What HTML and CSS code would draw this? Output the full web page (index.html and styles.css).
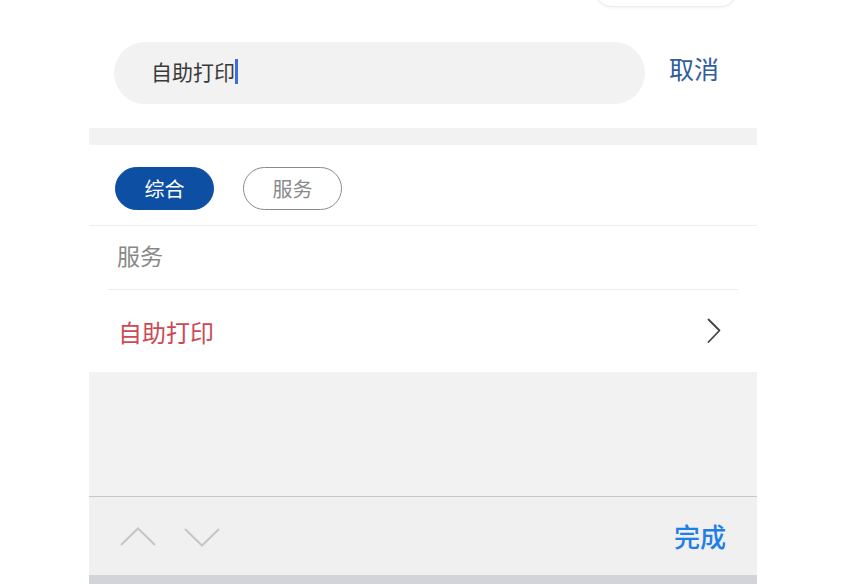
FILE: index.html
```html
<!DOCTYPE html>
<html lang="zh-CN">
<head>
<meta charset="utf-8">
<title>搜索</title>
<link rel="stylesheet" href="styles.css">
</head>
<body>
<div class="phone">
  <div class="top">
    <div class="top-pill"></div>
  </div>
  <div class="search-row">
    <div class="search-box">
      <span class="search-text">自助打印</span><span class="cursor"></span>
    </div>
    <div class="cancel">取消</div>
  </div>
  <div class="band"></div>
  <div class="tabs">
    <div class="pill active">综合</div>
    <div class="pill">服务</div>
  </div>
  <div class="section-title">服务</div>
  <div class="item">
    <span class="item-text">自助打印</span>
    <svg class="chev" width="14" height="26" viewBox="0 0 14 26"><path d="M1.5 1.5 L12.5 12.5 L1.5 24" fill="none" stroke="#444" stroke-width="1.8" stroke-linecap="round" stroke-linejoin="round"/></svg>
  </div>
  <div class="empty"></div>
  <div class="toolbar">
    <div class="arrows">
      <svg width="36" height="20" viewBox="0 0 36 20"><path d="M1 18 L18 1.5 L35 18" fill="none" stroke="#c6c6c6" stroke-width="2"/></svg>
      <svg width="36" height="20" viewBox="0 0 36 20"><path d="M1 2 L18 18.5 L35 2" fill="none" stroke="#c6c6c6" stroke-width="2"/></svg>
    </div>
    <div class="done">完成</div>
  </div>
  <div class="strip"></div>
</div>
</body>
</html>
```
FILE: styles.css
```css
html, body {
  margin: 0;
  padding: 0;
  background: #ffffff;
}
body {
  font-family: "Noto Sans CJK SC", "Noto Sans", sans-serif;
}
.phone {
  width: 668px;
  margin-left: 89px;
  display: flex;
  flex-direction: column;
}
.top {
  height: 42px;
  display: flex;
  justify-content: flex-end;
  padding-right: 20px;
  overflow: hidden;
}
.top-pill {
  width: 140px;
  height: 32px;
  margin-top: -27px;
  border: 1px solid #ececec;
  border-radius: 17px;
  box-shadow: 0 1px 3px rgba(0,0,0,0.05);
  background: #fff;
}
.search-row {
  display: flex;
  align-items: center;
  padding: 0 0 24px 25px;
}
.search-box {
  width: 494px;
  height: 58px;
  padding: 0 0 4px 37px;
  border-radius: 31px;
  background: #f2f2f2;
  display: flex;
  align-items: center;
}
.search-text {
  font-size: 21px;
  line-height: 26px;
  color: #3a3a3a;
}
.cursor {
  display: inline-block;
  width: 3px;
  height: 25px;
  background: #3d6ee0;
}
.cancel {
  margin-left: 24px;
  margin-bottom: 10px;
  font-size: 25px;
  line-height: 30px;
  color: #2f5d9e;
}
.band {
  height: 17px;
  background: #f2f2f2;
}
.tabs {
  display: flex;
  gap: 29px;
  padding: 22px 0 15px 26px;
  border-bottom: 1px solid #eeeeee;
}
.pill {
  width: 97px;
  height: 41px;
  border: 1px solid #8a8a8a;
  border-radius: 22px;
  display: flex;
  align-items: center;
  justify-content: center;
  font-size: 20px;
  color: #8a8a8a;
}
.pill.active {
  background: #0d4fa3;
  border-color: #0d4fa3;
  color: #ffffff;
}
.section-title {
  height: 58px;
  margin: 0 19px;
  padding: 0 0 5px 9px;
  display: flex;
  align-items: center;
  font-size: 23px;
  color: #888888;
  border-bottom: 1px solid #eeeeee;
}
.item {
  height: 82px;
  display: flex;
  align-items: center;
  justify-content: space-between;
  padding: 0 36px 0 29px;
}
.item-text {
  font-size: 24px;
  color: #cc4a55;
}
.chev {
  display: block;
}
.empty {
  height: 124px;
  background: #f2f2f2;
  border-bottom: 1px solid #c8c8c8;
}
.toolbar {
  height: 78px;
  background: #f0f0f0;
  display: flex;
  align-items: center;
  justify-content: space-between;
  padding: 0 31px 0 31px;
}
.arrows {
  display: flex;
  gap: 28px;
  margin-top: 2px;
}
.arrows svg {
  display: block;
}
.done {
  font-size: 26px;
  font-weight: 500;
  color: #1f7fe6;
  line-height: 30px;
}
.strip {
  height: 9px;
  background: #d3d4d9;
}
```
